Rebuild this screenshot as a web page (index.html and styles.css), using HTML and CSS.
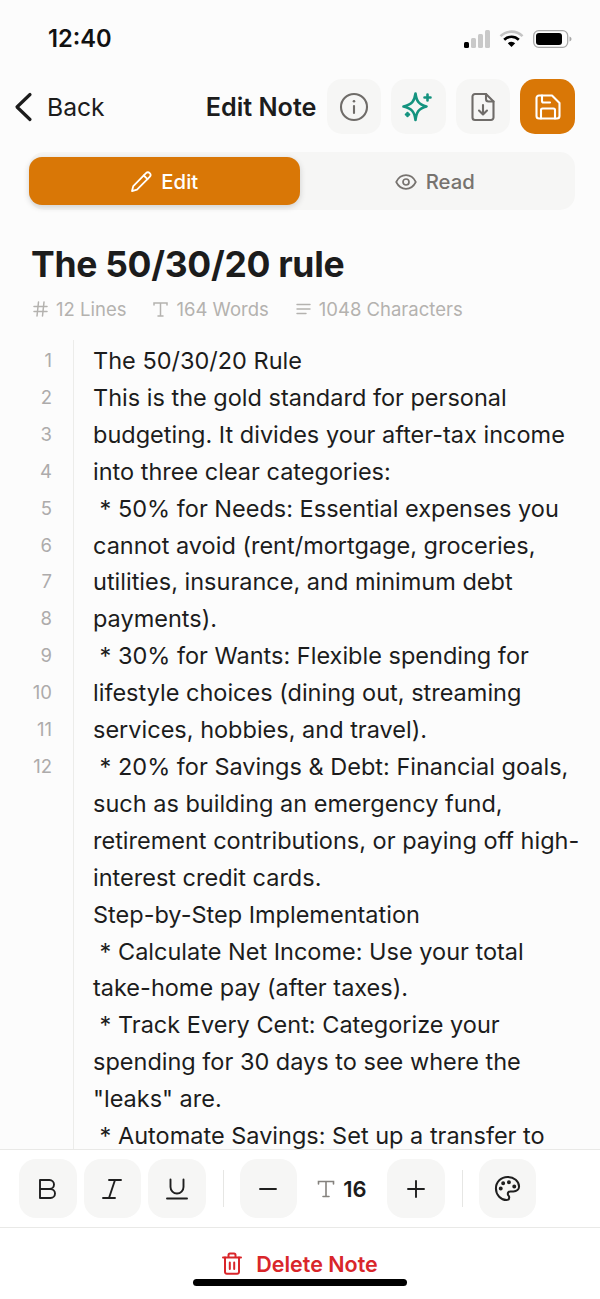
FILE: index.html
```html
<!DOCTYPE html>
<html lang="en">
<head>
    <meta charset="UTF-8">
    <meta name="viewport" content="width=device-width, initial-scale=1.0">
    <title>Edit Note</title>
    <link rel="stylesheet" href="styles.css">
</head>
<body>
    <div class="page">
        <div class="statusbar">
            <span class="time">12:40</span>
            <div class="status-icons">
                <svg width="26" height="18" viewBox="0 0 26 18"><rect x="0" y="12" width="5" height="6" rx="1.5" fill="#000"/><rect x="7" y="8" width="5" height="10" rx="1.5" fill="#c9c9c9"/><rect x="14" y="4" width="5" height="14" rx="1.5" fill="#c9c9c9"/><rect x="21" y="0" width="5" height="18" rx="1.5" fill="#c9c9c9"/></svg>
                <svg class="wifi" width="25" height="18" viewBox="0 0 25 18"><path d="M1.5 6.200a15.600 15.600 0 0 1 22 0" fill="none" stroke="#c4c4c4" stroke-width="2.600"/><path d="M5.200 9.800a10.400 10.400 0 0 1 14.600 0" fill="none" stroke="#000" stroke-width="2.600"/><path d="M8.800 13.200a5.300 5.300 0 0 1 7.400 0L12.500 17z" fill="#000"/></svg>
                <svg width="39" height="18" viewBox="0 0 39 18"><rect x="0.7" y="0.7" width="34" height="16.600" rx="5" fill="none" stroke="#a8a8a8" stroke-width="1.300"/><rect x="3" y="3" width="26" height="12" rx="3" fill="#000"/><path d="M36.500 6.500c1.400.4 2 1.400 2 2.500s-.6 2.100-2 2.500z" fill="#a8a8a8"/></svg>
            </div>
        </div>

        <div class="topbar">
            <div class="back">
                <svg width="22" height="30" viewBox="0 0 22 30"><path d="M18 2.500 5 15l13 12.500" fill="none" stroke="#1c1c1c" stroke-width="3.200" stroke-linecap="round" stroke-linejoin="round"/></svg>
                <span>Back</span>
            </div>
            <div class="topbar-right">
                <span class="screen-title">Edit Note</span>
                <div class="actions">
                    <div class="icon-btn">
                        <svg width="30" height="30" viewBox="0 0 30 30" fill="none" stroke="#6f6c69" stroke-width="2.100" stroke-linecap="round"><circle cx="15" cy="15" r="13"/><path d="M15 14v7"/><path d="M15 9.200v.1" stroke-width="2.600"/></svg>
                    </div>
                    <div class="icon-btn">
                        <svg width="32" height="32" viewBox="0 0 32 32" fill="none" stroke="#14937f" stroke-width="2.600" stroke-linecap="round" stroke-linejoin="round"><path d="M13.500 2.500C14.500 10 16.500 13.500 24.500 15.500 16.500 17.500 14.500 21 13.500 29 12.500 21 10 17.500 1.500 15.500 10 13.500 12.500 10 13.500 2.500z"/><path d="M25.500 3.500v6M22.500 6.500h6"/><path d="M5.500 22v3M4 23.500h3"/></svg>
                    </div>
                    <div class="icon-btn">
                        <svg width="26" height="30" viewBox="0 0 26 30" fill="none" stroke="#6f6c69" stroke-width="2.100" stroke-linecap="round" stroke-linejoin="round"><path d="M16 2H5a2.500 2.500 0 0 0-2.500 2.500v21A2.500 2.500 0 0 0 5 28h16a2.500 2.500 0 0 0 2.500-2.500V9.500z"/><path d="M16 2v5a2.500 2.500 0 0 0 2.500 2.500h5"/><path d="M13 13v9M9 18.500l4 4 4-4"/></svg>
                    </div>
                    <div class="icon-btn icon-btn-save">
                        <svg width="26" height="26" viewBox="0 0 26 26" fill="none" stroke="#fff" stroke-width="2.100" stroke-linecap="round" stroke-linejoin="round"><path d="M17 1.500H4A2.500 2.500 0 0 0 1.500 4v18A2.500 2.500 0 0 0 4 24.500h18a2.500 2.500 0 0 0 2.500-2.500V9z"/><path d="M7 1.500V7a1.500 1.500 0 0 0 1.500 1.500H15"/><path d="M6 24.500V16a1.500 1.500 0 0 1 1.500-1.500h11A1.500 1.500 0 0 1 20 16v8.500"/></svg>
                    </div>
                </div>
            </div>
        </div>

        <div class="tabs">
            <div class="tab tab-active">
                <svg width="22" height="22" viewBox="0 0 22 22" fill="none" stroke="#fff" stroke-width="1.800" stroke-linecap="round" stroke-linejoin="round"><path d="M16 2.200a2.600 2.600 0 0 1 3.700 3.700L7 18.700l-5 1.400 1.300-5z"/><path d="M13.800 4.500l3.700 3.700"/></svg>
                <span>Edit</span>
            </div>
            <div class="tab">
                <svg width="22" height="16" viewBox="0 0 22 16" fill="none" stroke="#77736f" stroke-width="1.700" stroke-linecap="round" stroke-linejoin="round"><path d="M1.200 8C3.400 3.600 6.800 1.200 11 1.200S18.600 3.600 20.800 8c-2.200 4.400-5.600 6.800-9.800 6.800S3.400 12.400 1.200 8z"/><circle cx="11" cy="8" r="3"/></svg>
                <span>Read</span>
            </div>
        </div>

        <h1 class="note-title">The 50/30/20 rule</h1>

        <div class="stats">
            <div class="stat">
                <svg width="15" height="16" viewBox="0 0 15 16" fill="none" stroke="#b4b2af" stroke-width="1.500" stroke-linecap="round"><path d="M1 5.500h13M1 10.500h13M5.500 1 4 15M11 1 9.500 15"/></svg>
                <span>12 Lines</span>
            </div>
            <div class="stat">
                <svg width="15" height="15" viewBox="0 0 15 15" fill="none" stroke="#b4b2af" stroke-width="1.500" stroke-linecap="round"><path d="M1 3V1h13v2M7.500 1v13M5 14h5"/></svg>
                <span>164 Words</span>
            </div>
            <div class="stat">
                <svg width="15" height="12" viewBox="0 0 15 12" fill="none" stroke="#b4b2af" stroke-width="1.400" stroke-linecap="round"><path d="M1 1.500h13M1 6h13M1 10.500h9"/></svg>
                <span>1048 Characters</span>
            </div>
        </div>

        <div class="editor">
            <div class="gutter">
                <div>1</div><div>2</div><div>3</div><div>4</div><div>5</div><div>6</div>
                <div>7</div><div>8</div><div>9</div><div>10</div><div>11</div><div>12</div>
            </div>
            <div class="note-body">
                <p>The 50/30/20 Rule</p>
                <p>This is the gold standard for personal budgeting. It divides your after-tax income into three clear categories:</p>
                <p>&nbsp;* 50% for Needs: Essential expenses you cannot avoid (rent/mortgage, groceries, utilities, insurance, and minimum debt payments).</p>
                <p>&nbsp;* 30% for Wants: Flexible spending for lifestyle choices (dining out, streaming services, hobbies, and travel).</p>
                <p>&nbsp;* 20% for Savings &amp; Debt: Financial goals, such as building an emergency fund, retirement contributions, or paying off high-interest credit cards.</p>
                <p>Step-by-Step Implementation</p>
                <p>&nbsp;* Calculate Net Income: Use your total take-home pay (after taxes).</p>
                <p>&nbsp;* Track Every Cent: Categorize your spending for 30 days to see where the "leaks" are.</p>
                <p>&nbsp;* Automate Savings: Set up a transfer to</p>
            </div>
        </div>

        <div class="toolbar">
            <div class="tool-btn">
                <svg width="20" height="22" viewBox="0 0 20 22" fill="none" stroke="#1f1f1f" stroke-width="1.900" stroke-linejoin="round"><path d="M2 2h9.500a4.500 4.500 0 0 1 0 9H2zM2 11h10.500a4.500 4.500 0 0 1 0 9H2z"/></svg>
            </div>
            <div class="tool-btn">
                <svg width="22" height="22" viewBox="0 0 22 22" fill="none" stroke="#1f1f1f" stroke-width="1.900" stroke-linecap="round"><path d="M8 2h12M2 20h12M14 2 8 20"/></svg>
            </div>
            <div class="tool-btn">
                <svg width="22" height="22" viewBox="0 0 22 22" fill="none" stroke="#1f1f1f" stroke-width="1.900" stroke-linecap="round"><path d="M4.500 1.500V9a6.500 6.500 0 0 0 13 0V1.500"/><path d="M1 20.500h20"/></svg>
            </div>
            <div class="tool-sep"></div>
            <div class="tool-btn">
                <svg width="18" height="4" viewBox="0 0 18 4" fill="none" stroke="#1f1f1f" stroke-width="1.900" stroke-linecap="round"><path d="M1 2h16"/></svg>
            </div>
            <div class="font-size">
                <svg width="18" height="18" viewBox="0 0 18 18" fill="none" stroke="#85827e" stroke-width="1.600" stroke-linecap="round"><path d="M1.500 4V1.500h15V4M9 1.500v15M6 16.500h6"/></svg>
                <span>16</span>
            </div>
            <div class="tool-btn">
                <svg width="18" height="18" viewBox="0 0 18 18" fill="none" stroke="#1f1f1f" stroke-width="1.900" stroke-linecap="round"><path d="M1 9h16M9 1v16"/></svg>
            </div>
            <div class="tool-sep"></div>
            <div class="tool-btn">
                <svg width="27" height="27" viewBox="0 0 28 28" fill="none" stroke="#1f1f1f" stroke-width="2.100" stroke-linecap="round" stroke-linejoin="round"><path d="M14 2C7.300 2 2 7.300 2 14s5.300 12 11 12c1.800 0 2.800-1.300 2.800-2.700 0-.7-.3-1.300-.7-1.800-.5-.6-.8-1.100-.8-1.900 0-1.500 1.300-2.600 2.800-2.600h3C23.500 17 26 14.900 26 12 26 6.500 20.700 2 14 2z"/><circle cx="15.500" cy="7.500" r="1" fill="#1f1f1f"/><circle cx="21" cy="12" r="1" fill="#1f1f1f"/><circle cx="9.500" cy="8.500" r="1" fill="#1f1f1f"/><circle cx="7" cy="14" r="1" fill="#1f1f1f"/></svg>
            </div>
        </div>

        <div class="footer">
            <svg width="20" height="23" viewBox="0 0 20 23" fill="none" stroke="#d9262a" stroke-width="2" stroke-linecap="round" stroke-linejoin="round"><path d="M1 5.500h18M6.500 5.500V3a1.500 1.500 0 0 1 1.500-1.500h4A1.500 1.500 0 0 1 13.500 3v2.500"/><path d="M3 5.500V20a1.800 1.800 0 0 0 1.800 1.800h10.400A1.800 1.800 0 0 0 17 20V5.500"/><path d="M7.800 10.500v6.500M12.200 10.500v6.500"/></svg>
            <span>Delete Note</span>
        </div>

        <div class="home-bar"></div>
    </div>
</body>
</html>
```

FILE: styles.css
```css
* {
    box-sizing: border-box;
}

html, body {
    margin: 0;
    padding: 0;
}

body {
    background: #fcfcfc;
    color: #1c1c1c;
    font-family: Inter, "Noto Sans", sans-serif;
}

.page {
    position: relative;
    display: flex;
    flex-direction: column;
    width: 600px;
    height: 1299px;
    overflow: hidden;
}

/* status bar */
.statusbar {
    display: flex;
    justify-content: space-between;
    align-items: center;
    height: 77px;
    padding: 0 28px 0 48px;
}

.time {
    font-size: 23.700px;
    font-weight: 600;
    color: #111;
}

.status-icons {
    display: flex;
    align-items: center;
    gap: 9px;
}

/* header */
.topbar {
    display: flex;
    justify-content: space-between;
    align-items: center;
    height: 59px;
    padding: 0 25px 0 12px;
}

.back {
    display: flex;
    align-items: center;
    gap: 13px;
    font-size: 24.700px;
}

.topbar-right {
    display: flex;
    align-items: center;
    gap: 10px;
}

.screen-title {
    font-size: 25.200px;
    font-weight: 600;
}

.actions {
    display: flex;
    gap: 10px;
}

.icon-btn {
    display: flex;
    justify-content: center;
    align-items: center;
    width: 54.500px;
    height: 55px;
    border-radius: 15px;
    background: #f6f6f5;
}

.icon-btn-save {
    width: 55px;
    background: #d97706;
}

/* edit / read switch */
.tabs {
    display: flex;
    height: 58px;
    margin: 16px 25px 0 29px;
    padding: 5px 5px 5px 0;
    border-radius: 15px;
    background: #f6f6f5;
}

.tab {
    display: flex;
    flex: 1;
    justify-content: center;
    align-items: center;
    gap: 9px;
    padding-top: 1px;
    border-radius: 13px;
    font-size: 20.300px;
    font-weight: 500;
    color: #77736f;
}

.tab-active {
    background: #d97706;
    color: #fff;
    box-shadow: 0 2px 6px rgba(0, 0, 0, 0.16);
}

/* note */
.note-title {
    margin: 33px 0 0 31px;
    font-size: 35.500px;
    line-height: 44px;
    font-weight: 700;
    letter-spacing: -0.3px;
}

.stats {
    display: flex;
    gap: 27px;
    margin: 11px 0 0 33px;
    font-size: 18.500px;
    line-height: 22px;
    color: #b4b2af;
}

.stat {
    display: flex;
    align-items: center;
    gap: 8px;
}

.editor {
    display: flex;
    flex: 1;
    min-height: 0;
    margin-top: 20px;
    overflow: hidden;
}

.gutter {
    width: 74px;
    padding: 2px 21px 0 0;
    border-right: 1px solid #ececea;
    text-align: right;
    font-size: 18.500px;
    line-height: 36.900px;
    color: #adabab;
}

.note-body {
    flex: 1;
    padding: 3px 18px 0 19px;
    font-size: 23.500px;
    line-height: 36.900px;
}

.note-body p {
    margin: 0;
}

/* formatting toolbar */
.toolbar {
    display: flex;
    align-items: center;
    gap: 7px;
    height: 79px;
    padding: 0 19px;
    background: #fff;
    border-top: 1px solid #e9e9e7;
    border-bottom: 1px solid #e9e9e7;
}

.tool-btn {
    display: flex;
    justify-content: center;
    align-items: center;
    width: 57.500px;
    height: 59px;
    border-radius: 17px;
    background: #f6f6f5;
}

.tool-sep {
    width: 1px;
    height: 37px;
    margin: 0 9px 0 10px;
    background: #e6e6e4;
}

.font-size {
    display: flex;
    justify-content: center;
    align-items: center;
    gap: 8px;
    width: 76px;
    font-size: 22px;
    font-weight: 600;
}

/* delete */
.footer {
    display: flex;
    justify-content: center;
    align-items: center;
    gap: 14px;
    height: 71px;
    background: #fff;
    font-size: 21.500px;
    font-weight: 600;
    color: #d9262a;
}

.home-bar {
    position: absolute;
    left: 193px;
    bottom: 13px;
    width: 214px;
    height: 7px;
    border-radius: 4px;
    background: #000;
}
```
